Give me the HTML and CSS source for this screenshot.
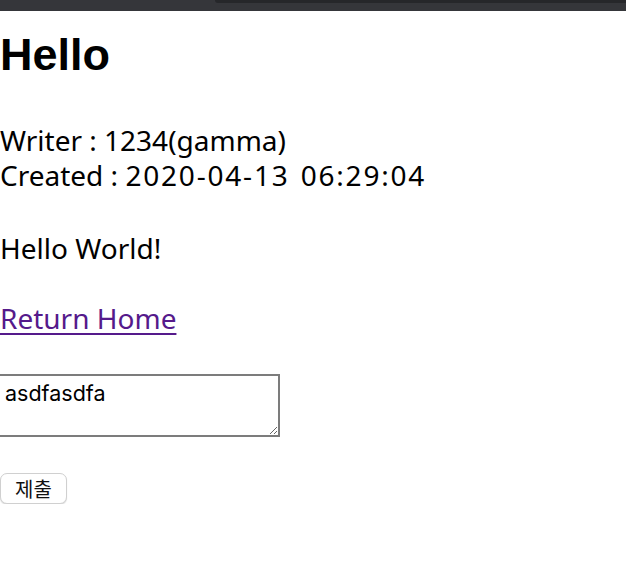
FILE: index.html
```html
<!DOCTYPE html>
<html lang="ko">
<head>
<meta charset="utf-8">
<title>Hello</title>
<link rel="stylesheet" href="styles.css">
</head>
<body>
<div class="topbar"><div class="tabedge"></div></div>
<main class="page">
  <h1 class="title">Hello</h1>
  <p class="meta">Writer : 1234(gamma)<br>Created : <span class="date">2020-04-13 06:29:04</span></p>
  <p class="content">Hello World!</p>
  <p class="back"><a href="#" class="home-link">Return Home</a></p>
  <form class="comment-form">
    <textarea class="comment-input" name="comment">asdfasdfa</textarea>
    <button type="button" class="submit-btn">제출</button>
  </form>
</main>
</body>
</html>
```

FILE: styles.css
```css
html, body {
  margin: 0;
  padding: 0;
  background: #ffffff;
}

body {
  font-family: "Noto Sans", "Noto Sans CJK KR", sans-serif;
  font-size: 28px;
  line-height: 35px;
  color: #000000;
}

.topbar {
  height: 11px;
  background: #35363a;
  display: flex;
}

.tabedge {
  margin-left: 215px;
  flex: 1;
  height: 3px;
  background: #26272a;
  border-bottom-left-radius: 6px;
}

.page {
  display: flex;
  flex-direction: column;
  align-items: flex-start;
}

.title {
  font-family: "Liberation Sans", Arial, sans-serif;
  font-weight: bold;
  font-size: 45px;
  line-height: 45px;
  margin: 21px 0 0;
}

.meta {
  margin: 46px 0 0;
}

.date {
  letter-spacing: 1.8px;
  word-spacing: 2px;
}

.content {
  margin: 38px 0 0;
}

.back {
  margin: 35px 0 0;
}

.home-link {
  color: #551a8b;
  text-decoration: underline;
  text-decoration-thickness: 2px;
  text-underline-offset: 4px;
}

.comment-form {
  margin: 38px 0 0;
  display: flex;
  flex-direction: column;
  align-items: flex-start;
}

.comment-input {
  display: block;
  box-sizing: border-box;
  width: 280px;
  height: 63px;
  margin: 0;
  padding: 4px 4px 4px 5px;
  border: 2px solid #7c7c7c;
  border-left: none;
  border-radius: 0;
  font-family: Inter, "Liberation Sans", sans-serif;
  font-size: 21.5px;
  line-height: normal;
  color: #000000;
  background: #ffffff;
  resize: both;
  outline: none;
}

.submit-btn {
  margin: 36px 0 0;
  box-sizing: border-box;
  width: 67px;
  height: 31px;
  padding: 0;
  border: 1px solid #d0d0d0;
  border-radius: 7px;
  background: #ffffff;
  box-shadow: 0 1px 1px rgba(0, 0, 0, 0.14);
  font-family: "Noto Sans CJK KR", sans-serif;
  font-size: 20px;
  line-height: 28px;
  color: #111111;
}
```
